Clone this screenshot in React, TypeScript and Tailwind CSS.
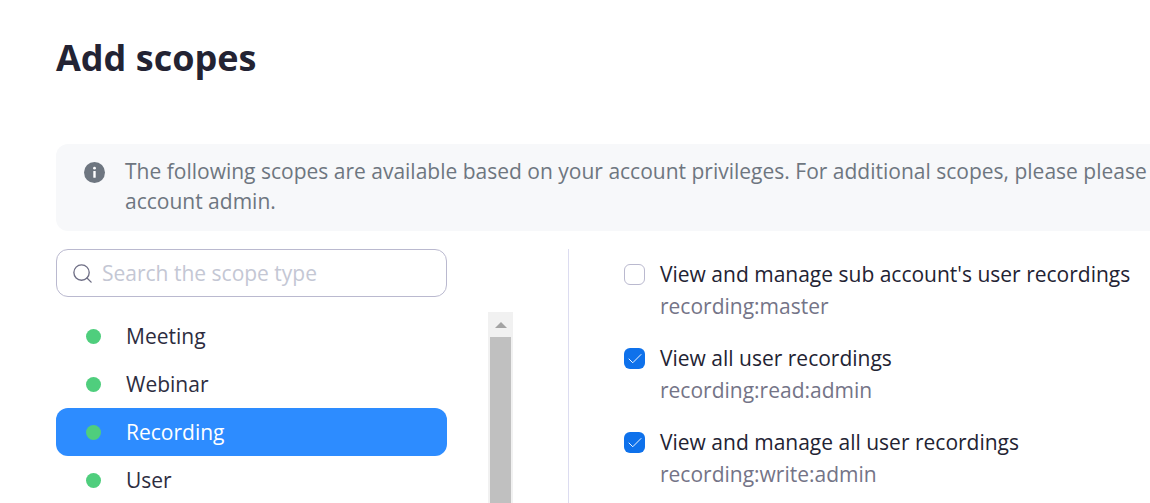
import { Search, Check } from 'lucide-react';

const categories = ['Meeting', 'Webinar', 'Recording', 'User'];

const scopes = [
  { title: "View and manage sub account's user recordings", name: 'recording:master', checked: false },
  { title: 'View all user recordings', name: 'recording:read:admin', checked: true },
  { title: 'View and manage all user recordings', name: 'recording:write:admin', checked: true },
];

export default function App() {
  return (
    <div className="h-[503px] w-[1150px] overflow-hidden bg-white pl-14 font-['Open_Sans',sans-serif]">
      <h1 className="pt-[33px] text-[36px] leading-[50px] font-bold text-[#232333]">Add scopes</h1>

      {/* Info banner runs past the window edge */}
      <div className="mt-[61px] flex h-[87px] w-[1240px] rounded-xl bg-[#f7f8fa] pt-[12px] pl-[28px]">
        <svg className="mt-[6px] h-[21px] w-[21px] shrink-0" viewBox="0 0 21 21">
          <circle cx="10.5" cy="10.5" r="10.5" fill="#6e7680" />
          <circle cx="10.5" cy="6.2" r="1.4" fill="#fff" />
          <rect x="9.3" y="9" width="2.4" height="6.8" rx="0.6" fill="#fff" />
        </svg>
        <p className="ml-[20px] text-[21px] leading-[30px] text-[#6e7680]">
          The following scopes are available based on your account privileges. For additional scopes, please please
          <br />
          account admin.
        </p>
      </div>

      <div className="mt-[18px] flex">
        <div className="w-[391px] shrink-0">
          <div className="flex h-[48px] items-center rounded-xl border border-[#bab9cf] pl-[14px]">
            <Search className="h-[23px] w-[23px] text-[#6e6e85]" strokeWidth={1.4} />
            <span className="mt-[1px] ml-[8px] text-[21px] text-[#c4c7d4]">Search the scope type</span>
          </div>
          <ul className="mt-[15px]">
            {categories.map((c) => (
              <li
                key={c}
                className={`flex h-[48px] items-center rounded-xl pl-[30px] text-[21px] ${
                  c === 'Recording' ? 'bg-[#2d8cff] text-white' : 'text-[#2d2d3f]'
                }`}
              >
                <span className="h-[15px] w-[15px] rounded-full bg-[#4fce7d]" />
                <span className="mt-[1px] ml-[25px]">{c}</span>
              </li>
            ))}
          </ul>
        </div>

        {/* List scrollbar */}
        <div className="mt-[63px] ml-[41px] h-[200px] w-[25px] shrink-0 bg-[#f1f1f1] px-[2px]">
          <div className="flex h-[25px] items-center justify-center">
            <div className="h-0 w-0 border-x-[6px] border-b-[6px] border-x-transparent border-b-[#a3a3a3]" />
          </div>
          <div className="h-[175px] bg-[#c0c0c0]" />
        </div>

        <div className="ml-[55px] h-[300px] w-px shrink-0 bg-[#dcdcf0]" />

        <div className="ml-[55px] flex flex-col gap-[20px] pt-[9px]">
          {scopes.map((s) => (
            <div key={s.name} className="flex">
              <div
                className={`mt-[6px] flex h-[21px] w-[21px] shrink-0 items-center justify-center rounded-md ${
                  s.checked ? 'bg-[#0e71eb]' : 'border border-[#bab9cf] bg-white'
                }`}
              >
                {s.checked && <Check className="h-[18px] w-[18px] text-white" strokeWidth={1.25} />}
              </div>
              <div className="ml-[15px] text-[21px] leading-[32px] whitespace-nowrap">
                <div className="text-[#232333]">{s.title}</div>
                <div className="text-[#747487]">{s.name}</div>
              </div>
            </div>
          ))}
        </div>
      </div>
    </div>
  );
}
